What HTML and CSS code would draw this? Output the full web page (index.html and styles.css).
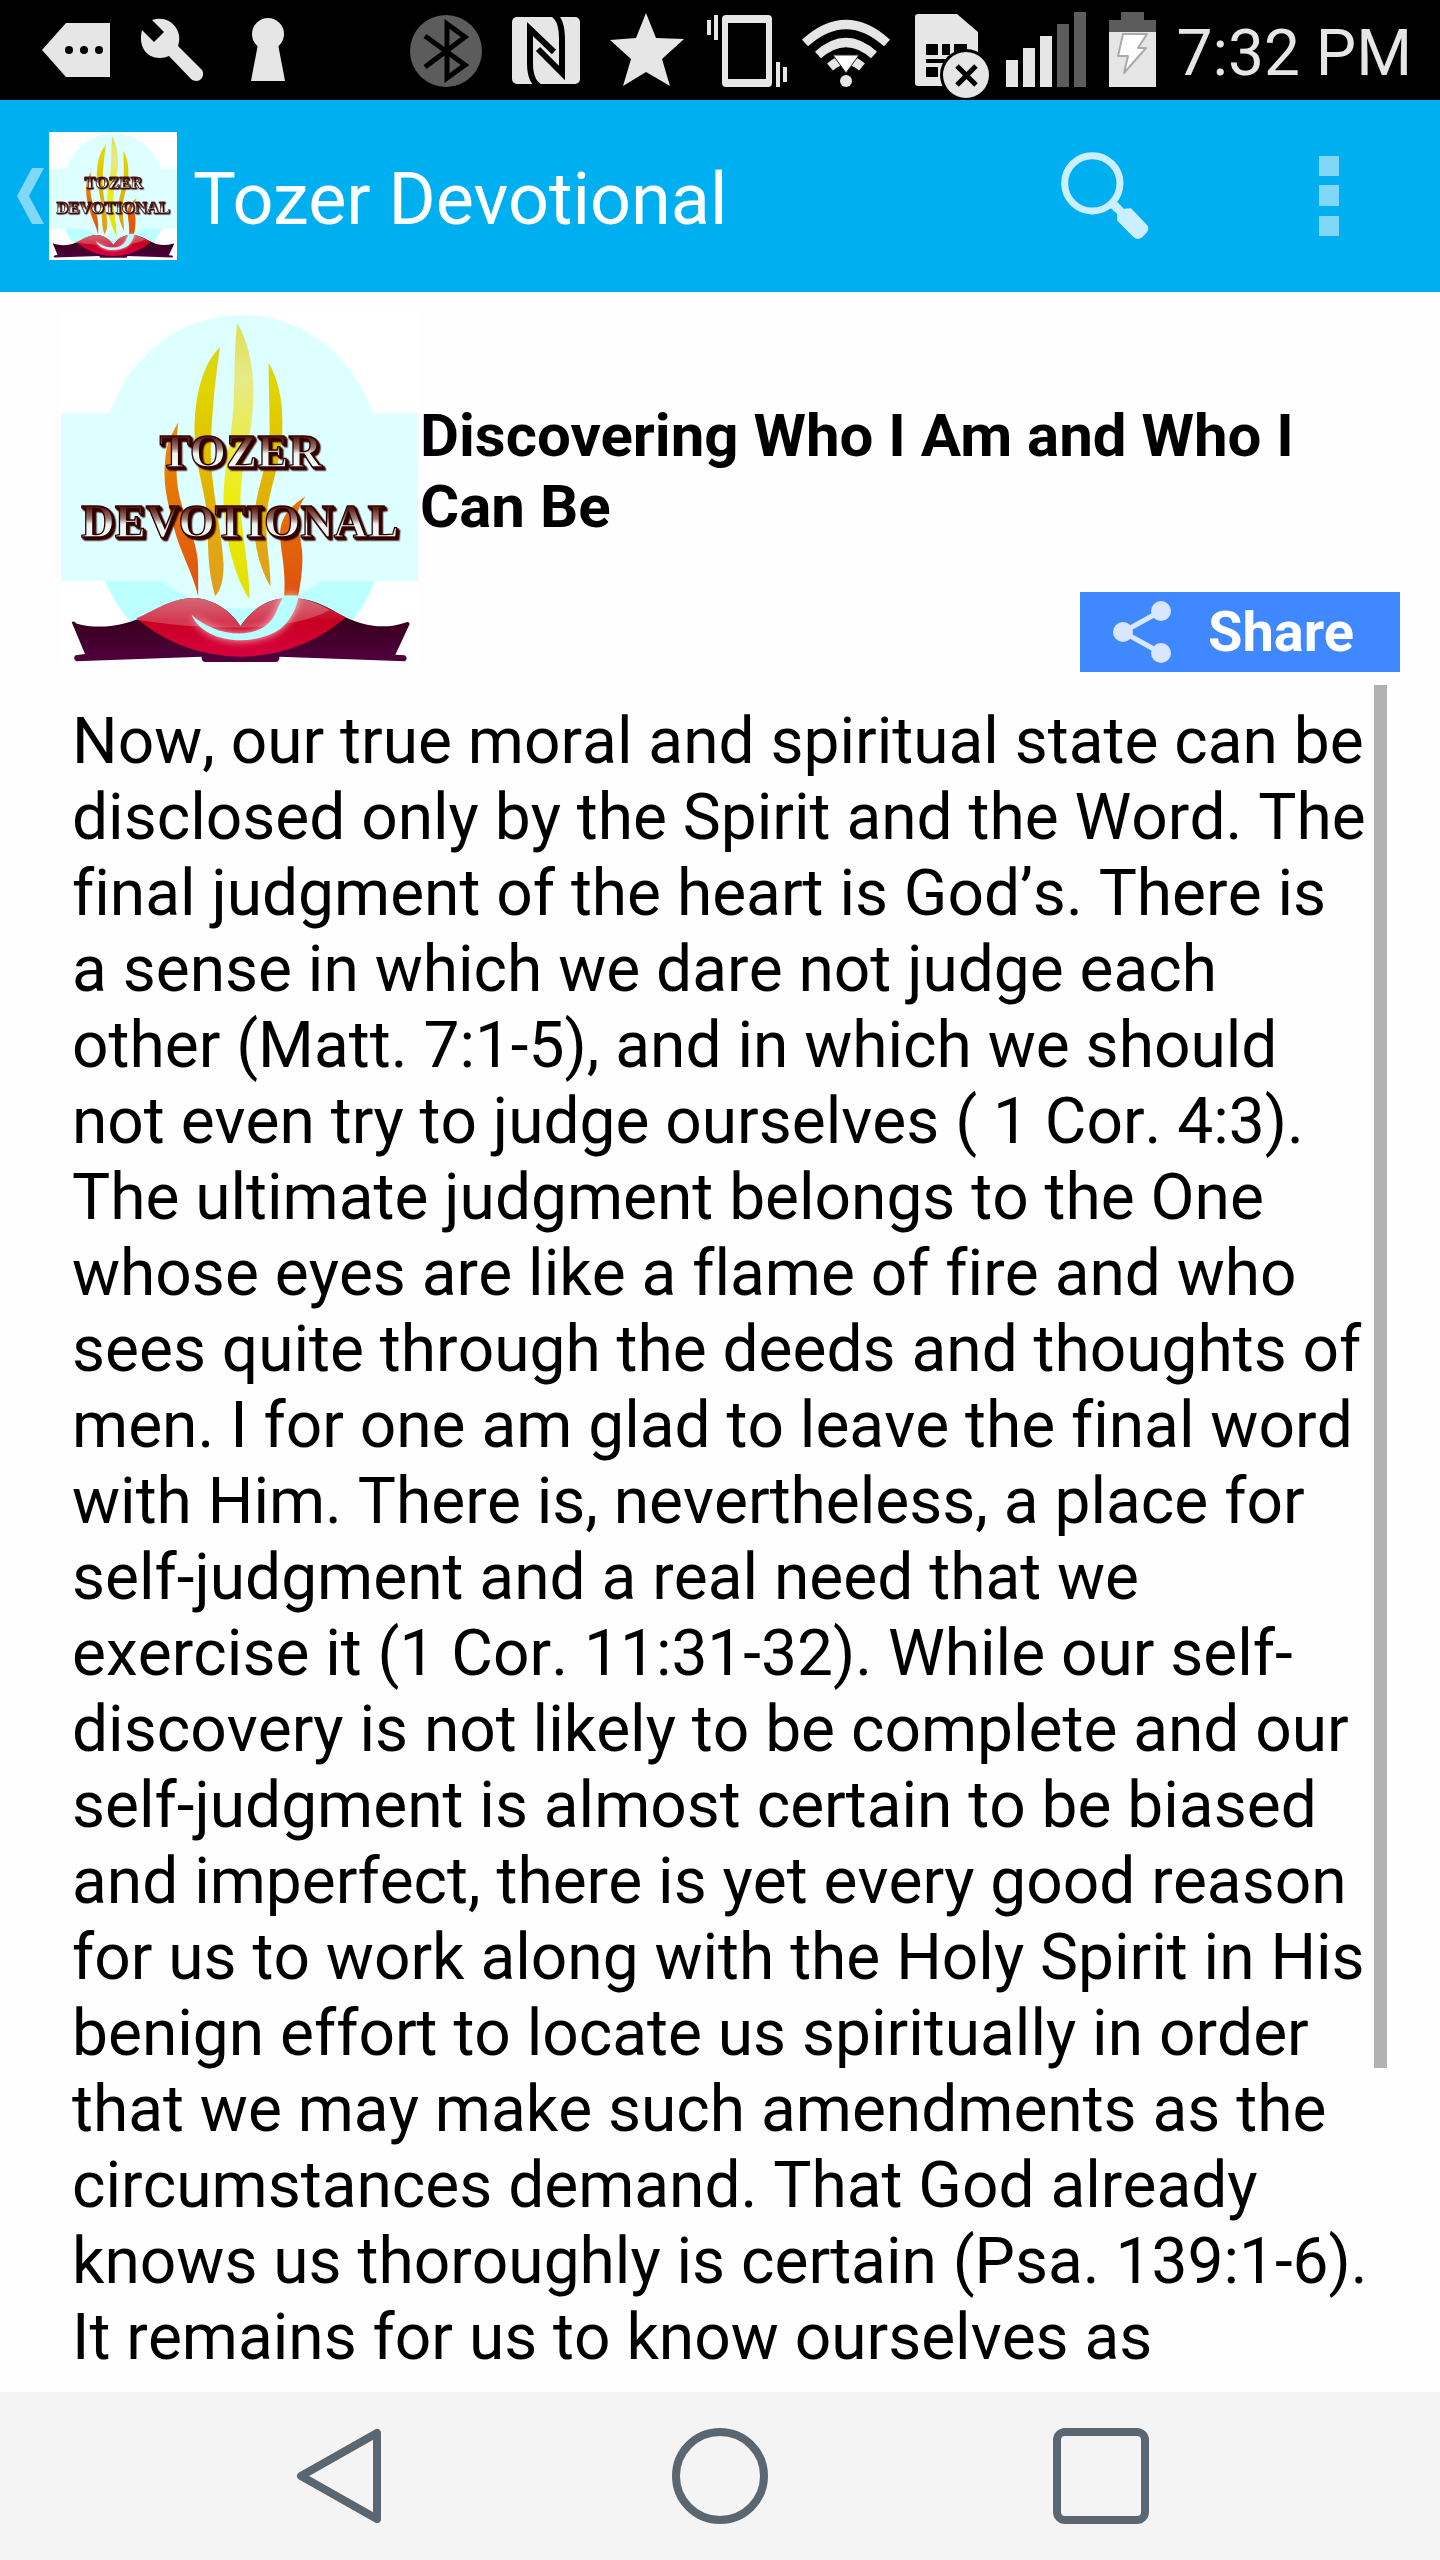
FILE: index.html
```html
<!DOCTYPE html>
<html lang="en">
<head>
<meta charset="utf-8">
<meta name="viewport" content="width=device-width, initial-scale=1">
<title>Tozer Devotional</title>
<link rel="stylesheet" href="styles.css">
</head>
<body>
<svg class="defs" aria-hidden="true">
  <defs>
    <linearGradient id="flame" gradientUnits="userSpaceOnUse" x1="0" y1="70" x2="0" y2="890">
      <stop offset="0" stop-color="#d8d820"/><stop offset=".25" stop-color="#e0d400"/><stop offset=".6" stop-color="#e0b400"/><stop offset="1" stop-color="#e09c20"/>
    </linearGradient>
    <linearGradient id="flame-mid" gradientUnits="userSpaceOnUse" x1="0" y1="70" x2="0" y2="890">
      <stop offset="0" stop-color="#dddf50"/><stop offset=".2" stop-color="#e6ea88"/><stop offset=".65" stop-color="#ecec10"/><stop offset="1" stop-color="#e0e000"/>
    </linearGradient>
    <linearGradient id="flame-edge" gradientUnits="userSpaceOnUse" x1="0" y1="370" x2="0" y2="890">
      <stop offset="0" stop-color="#e89000"/><stop offset="1" stop-color="#e05010"/>
    </linearGradient>
    <linearGradient id="cover" gradientUnits="userSpaceOnUse" x1="0" y1="960" x2="0" y2="1090">
      <stop offset="0" stop-color="#38001c"/><stop offset="1" stop-color="#500040"/>
    </linearGradient>
    <linearGradient id="bowl" gradientUnits="userSpaceOnUse" x1="0" y1="895" x2="0" y2="1070">
      <stop offset="0" stop-color="#c84050"/><stop offset=".4" stop-color="#c80020"/><stop offset="1" stop-color="#d80040"/>
    </linearGradient>
    <linearGradient id="letter" x1="0" y1="0" x2="0" y2="1">
      <stop offset=".25" stop-color="#5a2018"/><stop offset=".45" stop-color="#a08078"/><stop offset=".55" stop-color="#e8f4f0"/><stop offset="1" stop-color="#ffffff"/>
    </linearGradient>
    <clipPath id="disc"><circle cx="573" cy="590" r="482"/></clipPath>
    <g id="logo-art">
      <path fill="#fff" d="M34 34h1072v1072H34z"/>
      <path fill="#bff" d="M150 800h840q-50 180-180 240H330q-130-80-180-240z"/>
      <path fill="#dff" d="M180 342C240 170 390 46 577 46s330 120 394 296h135v503H815q-110 83-240 83t-240-83H34V342z"/>
      <g fill="url(#flame)">
        <path d="M512 142C460 190 434 290 435 400c2 110 40 190 40 290 0 90 5 140 22 200 20-20 26-60 25-100-6-100-40-240-38-340 2-110 14-220 28-308z"/>
        <path d="M658 190c34 60 44 130 40 210-6 110-46 180-48 270 0 70 14 130 13 192-32-54-52-134-49-202 4-90 42-160 46-250 2-80-4-140-2-220z"/>
      </g>
      <path fill="url(#flame-mid)" d="M563 70c40 70 52 150 48 240-4 100-36 180-38 280 0 110 28 210 27 308-44-60-80-200-78-310 4-100 24-170 30-270 4-90 2-170 11-248z"/>
      <g fill="url(#flame-edge)">
        <path d="M386 368c-6 50-8 110-4 170 8 110 64 170 64 270v82c-16-70-58-140-74-210-20-80-34-130-24-210 4-40 20-70 38-102z"/>
        <path d="M768 590c-50 70-10 120 -14 140 10 40 4 100 -8 160h-42c6-80-10-130-12-180-2-60 34-90 76-120z"/>
      </g>
      <path fill="url(#cover)" d="M66 968q8-4 14 4c70 20 150 8 220-30 50-30 90-46 135-46 60 4 110 40 138 85 34-50 80-85 145-85 60 0 100 18 145 44 70 40 140 52 204 30q12-6 14 4l-43 92 28 2q12 10 0 18l-376-14q0 14-10 16H466q-10-2-10-16L80 1086q-12-10-2-18l28-4z"/>
      <path clip-path="url(#disc)" fill="url(#bowl)" d="M230 970c80-30 130-76 205-74 60 4 110 40 138 85 34-50 80-85 145-85 75-2 130 40 205 74v120H230z"/>
      <path fill="#fff" opacity=".22" d="M255 960c60-28 110-66 180-64 60 4 110 40 138 85 34-50 80-85 145-85 60 0 90 18 122 36-120 70-380 60-585 28z"/>
      <path class="logo-swoosh" fill="#b8ffff" d="M426 946c74 70 220 84 256-12 8-20 14-30 20-46h46c-8 46-30 86-70 110-100 50-222 20-252-52z"/>
    </g>
  </defs>
</svg>

<header class="status-bar">
  <div class="status-icons">
    <svg width="90" height="100" viewBox="36 0 90 100" role="img" aria-label="More notifications"><path fill="#e6e6e6" d="M42 50 66 23h44v54H66z"/><g fill="#000"><circle cx="69" cy="50" r="4"/><circle cx="84" cy="50" r="4"/><circle cx="99" cy="50" r="4"/></g></svg>
    <svg width="90" height="100" viewBox="126 0 90 100" role="img" aria-label="Tools"><path fill="#e6e6e6" d="m152 20 12 12-10 10-12-12c-4 16 4 28 18 28q5 0 9-2l22 23c8 6 15-3 11-9l-24-24c6-16-9-32-26-26z"/></svg>
    <svg width="90" height="100" viewBox="216 0 90 100" role="img" aria-label="Secure"><g fill="#e6e6e6"><circle cx="268" cy="34" r="16"/><path d="M258 44h20l7 37h-34z"/></g></svg>
  </div>
  <div class="status-icons status-right">
    <svg width="100" height="100" viewBox="396 0 100 100" role="img" aria-label="Bluetooth"><circle cx="446" cy="51" r="36" fill="#5c5c5c"/><path fill="none" stroke="#000" stroke-width="5" d="m425 36 40 29-18 13V24l18 13-40 30"/></svg>
    <svg width="100" height="100" viewBox="496 0 100 100" role="img" aria-label="NFC"><rect x="512" y="17" width="68" height="67" rx="5" fill="#e6e6e6"/><g fill="none" stroke="#000" stroke-width="6"><path d="M554 52 530 29v34q0 18 9 23"/><path d="m538 49 24 24V40q0-20-8-25"/></g></svg>
    <svg width="100" height="100" viewBox="596 0 100 100" role="img" aria-label="Priority"><path fill="#e6e6e6" d="m646 13 10 25 28 1-22 20 8 27-24-14-23 14 8-27-21-19 26-2z"/></svg>
    <svg width="100" height="100" viewBox="696 0 100 100" role="img" aria-label="Vibrate"><path fill="#e6e6e6" fill-rule="evenodd" d="M726 15h42q4 0 4 4v64q0 4-4 4h-42q-4 0-4-4V19q0-4 4-4zm2 8v56h38V23z"/><path fill="#e6e6e6" d="M707 20h4v15h-4zM714 15h4v25h-4zM776 62h4v25h-4zM783 67h4v15h-4z"/></svg>
    <svg width="100" height="100" viewBox="796 0 100 100" role="img" aria-label="Wi-Fi"><g fill="none" stroke="#e6e6e6" stroke-width="9"><path d="M805 43q41-37 82 0M818 55q28-25 56 0M830 67q16-14 32 0"/></g><circle cx="846" cy="81" r="6" fill="#e6e6e6"/><path fill="#fff" stroke="#222" stroke-width="1" d="M833 55h26l-13 18z"/></svg>
    <svg width="100" height="100" viewBox="896 0 100 100" role="img" aria-label="SIM error"><path fill="#e6e6e6" d="M918 14h39l21 18v54h-60q-3 0-3-3V17q0-3 3-3z"/><path d="M926 44h12v11h-12zM942 44h8v11h-8zM954 44h13v11h-13zM926 59h28v4h-28zM926 67h12v10h-12z"/><circle cx="966" cy="75" r="26"/><circle cx="966" cy="75" r="23" fill="#e6e6e6"/><path stroke="#000" stroke-width="5" d="m957 66 19 19m0-19-19 19"/></svg>
    <svg width="100" height="100" viewBox="996 0 100 100" role="img" aria-label="Signal"><path fill="#e6e6e6" d="M1006 60h12v27h-12zM1023 48h12v39h-12zM1040 36h12v51h-12z"/><path fill="#5c5c5c" d="M1057 24h12v63h-12zM1074 12h12v75h-12z"/></svg>
    <svg width="80" height="100" viewBox="1096 0 80 100" role="img" aria-label="Battery charging"><path fill="#5c5c5c" d="M1121 12h23v8h12v13h-47V20h12z"/><path fill="#e6e6e6" d="M1109 32h47v55h-47z"/><path fill="#fff" stroke="#aaa" stroke-width="2" stroke-linejoin="round" d="M1123 34h24l-9 14h8l-22 25 4-17h-10z"/></svg>
    <time class="clock" datetime="19:32">7:32 PM</time>
  </div>
</header>

<div class="app-bar">
  <a class="home-link" href="#" aria-label="Back">
    <svg width="27" height="56" viewBox="0 0 27 56" aria-hidden="true"><path fill="#80d7f8" d="M15 0h12L12 28l15 28H15L0 28z"/></svg>
    <svg width="128" height="128" viewBox="34 34 1072 1072"><use href="#logo-art"/><g class="logo-text"><text x="330" y="502">TOZER</text><text x="94" y="714">DEVOTIONAL</text></g></svg>
  </a>
  <h1 class="app-title">Tozer Devotional</h1>
  <div class="actions">
    <button type="button" class="icon-button" aria-label="Search"><svg width="88" height="88" viewBox="180 153 264 264"><circle cx="274" cy="247" r="83" fill="none" stroke="#ccefff" stroke-width="21"/><path fill="#ccefff" d="m325 318 19-20 24 25 22-1 48 50q8 8 0 22l-14 15q-14 10-26 0l-49-50-1-21z"/></svg></button>
    <button type="button" class="icon-button" aria-label="More options"><svg width="20" height="80" viewBox="0 0 20 80"><path fill="#80d7f8" d="M0 0h20v20H0zM0 29h20v21H0zM0 60h20v20H0z"/></svg></button>
  </div>
</div>

<main class="content">
  <header class="entry-head">
    <svg width="357" height="357" viewBox="34 34 1072 1072"><use href="#logo-art"/><g class="logo-text"><text x="330" y="502">TOZER</text><text x="94" y="714">DEVOTIONAL</text></g></svg>
    <div class="entry-info">
      <h2 class="entry-title">Discovering Who I Am and Who I Can Be</h2>
      <button type="button" class="share"><svg width="60" height="64" viewBox="0 0 60 64" aria-hidden="true"><g fill="#d8e6ff"><circle cx="49" cy="11" r="10"/><circle cx="11" cy="32" r="10"/><circle cx="49" cy="53" r="10"/></g><path fill="none" stroke="#d8e6ff" stroke-width="5" d="M49 11 11 32l38 21"/></svg>Share</button>
    </div>
  </header>
  <article class="reader">
    <p class="passage">Now, our true moral and spiritual state can be disclosed only by the Spirit and the Word. The final judgment of the heart is God’s. There is a sense in which we dare not judge each other (Matt. 7:1-5), and in which we should not even try to judge ourselves ( 1 Cor. 4:3). The ultimate judgment belongs to the One whose eyes are like a flame of fire and who sees quite through the deeds and thoughts of men. I for one am glad to leave the final word with Him. There is, nevertheless, a place for self-judgment and a real need that we exercise it (1 Cor. 11:31-32). While our self-discovery is not likely to be complete and our self-judgment is almost certain to be biased and imperfect, there is yet every good reason for us to work along with the Holy Spirit in His benign effort to locate us spiritually in order that we may make such amendments as the circumstances demand. That God already knows us thoroughly is certain (Psa. 139:1-6). It remains for us to know ourselves as</p>
    <span class="scroll-thumb" aria-hidden="true"></span>
  </article>
</main>

<nav class="nav-bar" aria-label="System">
  <button type="button" class="icon-button" aria-label="Back"><svg width="96" height="96" viewBox="0 0 96 96"><path fill="none" stroke="#5b6770" stroke-width="8" stroke-linejoin="round" d="M10 48 86 5v86z"/></svg></button>
  <button type="button" class="icon-button" aria-label="Home"><svg width="96" height="96" viewBox="0 0 96 96"><circle cx="48" cy="48" r="44" fill="none" stroke="#5b6770" stroke-width="8"/></svg></button>
  <button type="button" class="icon-button" aria-label="Recent apps"><svg width="96" height="96" viewBox="0 0 96 96"><rect x="4" y="4" width="88" height="88" rx="8" fill="none" stroke="#5b6770" stroke-width="8"/></svg></button>
</nav>
</body>
</html>
```
FILE: styles.css
```css
* {
  box-sizing: border-box;
}

body {
  margin: 0;
  min-height: 100vh;
  display: flex;
  flex-direction: column;
  background: #fefefe;
  color: #000;
  font-family: Roboto, "Liberation Sans", sans-serif;
}

h1, h2, p {
  margin: 0;
}

svg {
  display: block;
  flex: none;
}

.defs {
  position: absolute;
  width: 0;
  height: 0;
}

.logo-text {
  font-family: "Liberation Serif", serif;
  font-weight: 700;
  font-size: 140px;
  fill: url(#letter);
  stroke: #300;
  stroke-width: 4px;
  filter: drop-shadow(5px 5px 0 #300) drop-shadow(4px 4px 0 #300);
}

.logo-swoosh {
  filter: drop-shadow(0 0 12px #fcc);
}

/* Status bar */
.status-bar {
  display: flex;
  justify-content: space-between;
  height: 100px;
  padding: 0 28px 0 36px;
  background: #000;
}

.status-icons {
  display: flex;
  align-items: center;
}

.clock {
  padding-top: 8px;
  color: #e6e6e6;
  font-size: 64px;
  line-height: 76px;
  white-space: nowrap;
}

/* App bar */
.app-bar {
  display: flex;
  align-items: center;
  gap: 16px;
  height: 192px;
  padding: 0 101px 0 17px;
  background: #00aff0;
}

.home-link {
  display: flex;
  align-items: center;
  gap: 5px;
}

.app-title {
  flex: 1;
  padding-top: 8px;
  color: #fff;
  font-size: 72px;
  font-weight: 400;
  line-height: 84px;
}

.actions {
  display: flex;
  align-items: center;
  gap: 170px;
}

.icon-button {
  display: flex;
  align-items: center;
  justify-content: center;
  padding: 0;
  border: 0;
  background: none;
}

/* Entry */
.content {
  flex: 1;
}

.entry-head {
  display: flex;
  gap: 2px;
  padding: 19px 40px 13px 61px;
}

.entry-info {
  flex: 1;
  display: flex;
  flex-direction: column;
  gap: 50px;
  padding-top: 89px;
}

.entry-title {
  font-size: 60px;
  font-weight: 700;
  line-height: 71px;
}

.share {
  align-self: flex-end;
  display: flex;
  align-items: center;
  gap: 36px;
  width: 320px;
  height: 80px;
  padding: 0 0 0 32px;
  border: 0;
  background: #4088ff;
  color: #fff;
  font: 700 56px/80px Roboto, "Liberation Sans", sans-serif;
}

.reader {
  position: relative;
  padding: 19px 70px 16px 72px;
}

.passage {
  font-size: 64px;
  font-kerning: none;
  font-variant-ligatures: none;
  line-height: 76px;
}

.scroll-thumb {
  position: absolute;
  top: 0;
  right: 53px;
  width: 13px;
  height: 81%;
  background: #b2b2b2;
}

/* Navigation bar */
.nav-bar {
  display: grid;
  grid-template-columns: repeat(3, 1fr);
  height: 168px;
  padding: 0 149px;
  background: #f4f4f4;
}
```
